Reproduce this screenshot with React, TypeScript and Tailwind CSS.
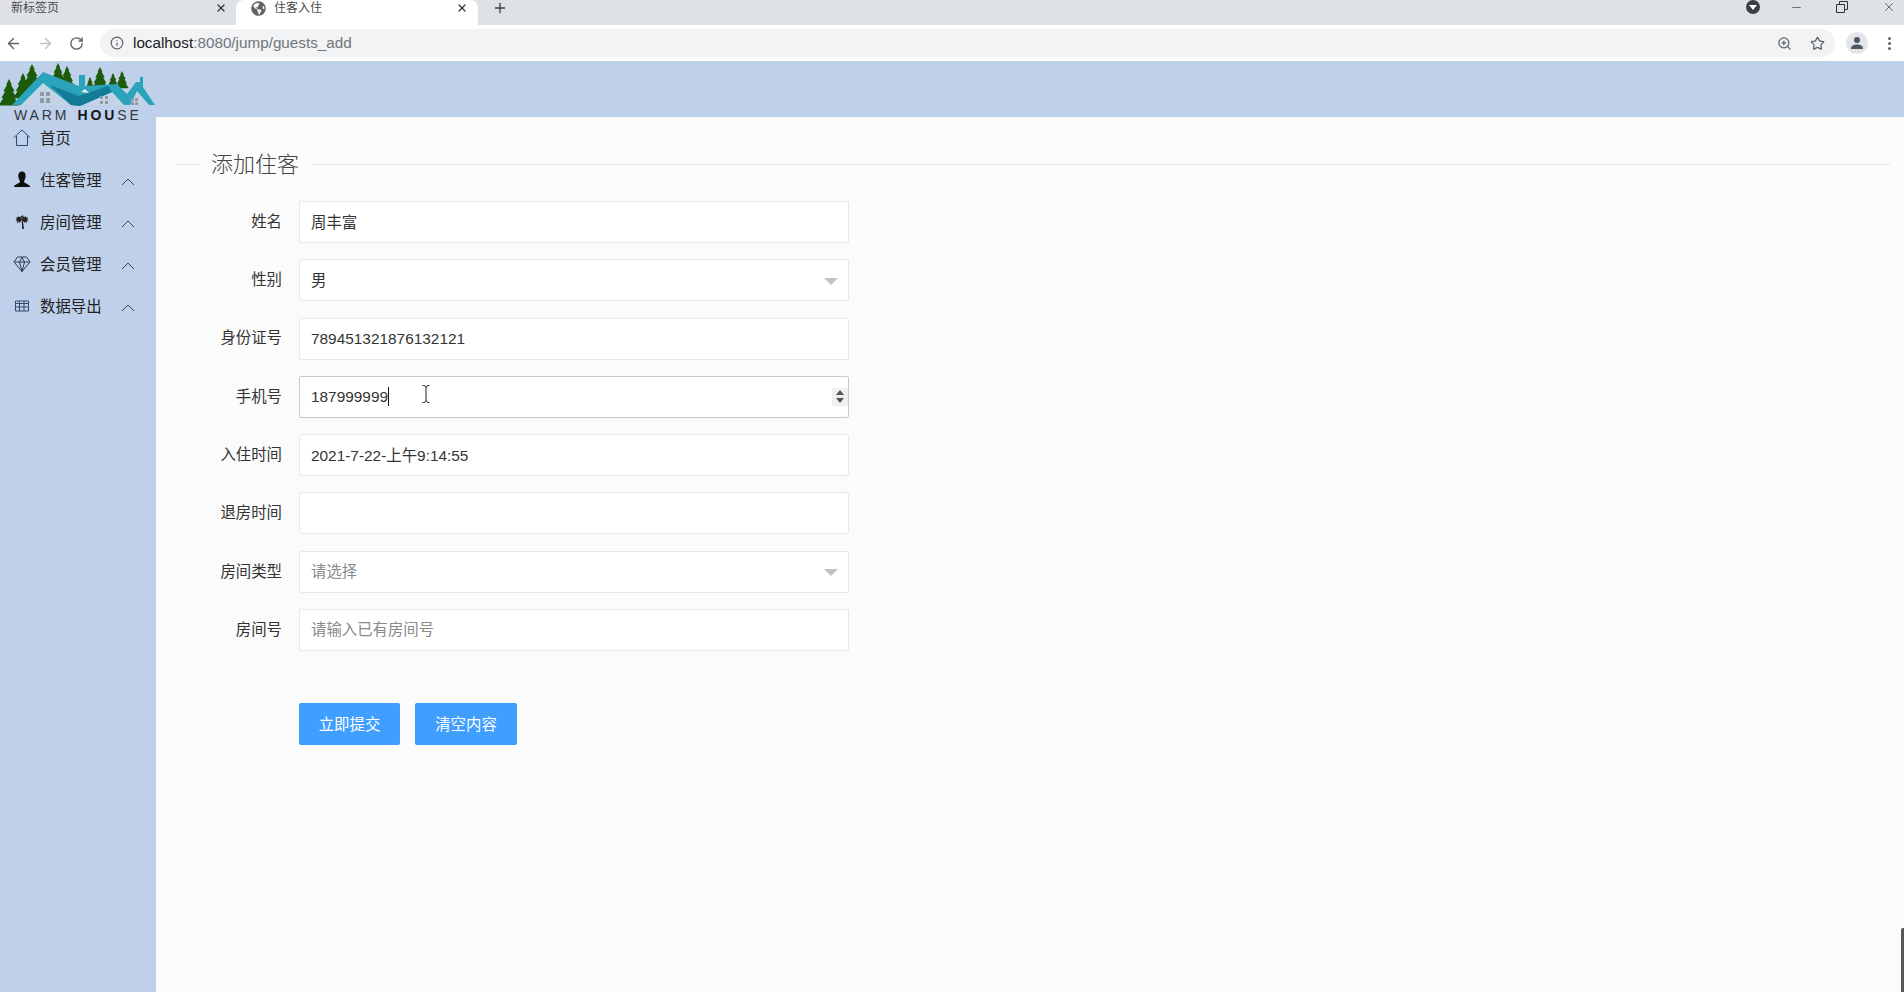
import React from 'react';
import { ArrowLeft, ArrowRight, RotateCw, Info, ZoomIn, Star, X, Plus, Minus } from 'lucide-react';
import { FaGlobeAmericas } from 'react-icons/fa';

const FONT = 'font-["Liberation_Sans","Noto_Sans_CJK_SC",sans-serif]';

const Tree = ({ x, y, s = 1 }: { x: number; y: number; s?: number }) => (
  <path
    transform={`translate(${x} ${y}) scale(${s})`}
    fill="#1d5a0a"
    d="M0 0 L3 6 L2 6 L6 13 L4 13 L8 20 L6 20 L11 28 L-11 28 L-6 20 L-8 20 L-4 13 L-6 13 L-2 6 L-3 6 Z"
  />
);

const Logo = () => (
  <div className="relative h-[62px] w-[156px] shrink-0">
    <svg viewBox="0 0 156 46" className="h-[46px] w-[156px]">
      <Tree x={9} y={18} s={0.95} />
      <Tree x={23} y={12} s={0.9} />
      <Tree x={32} y={3} s={0.95} />
      <Tree x={58} y={2} s={0.75} />
      <Tree x={67} y={5} s={0.75} />
      <Tree x={90} y={16} s={0.42} />
      <Tree x={100} y={6} s={0.8} />
      <Tree x={113} y={12} s={0.55} />
      <Tree x={122} y={10} s={0.62} />
      <path fill="#c3d3e8" d="M20 44 L43 17 L72 44 Z M84 44 L112 28 L124 44 Z M128 44 L137 28 L150 44 Z" />
      <path fill="#2ba3bb" d="M12 44 L43 11 L79 25 L79 14 L85 14 L85 25 L117 23 L127 33 L136 21 L140 21 L140 16 L143 16 L143 26 L155 44 L149 44 L137 30 L130 44 L124 44 L112 31 L80 45 L71 44 L43 22 L21 44 Z" />
      <path fill="#127c96" d="M50 24 L79 35 L108 25 L112 31 L80 45 L71 44 Z" />
      <path fill="#e6eef4" d="M81 31 L85 28 L89 32 Z" />
      <path fill="#8f9aa3" d="M40 31 h4 v4 h-4 z M46 31 h4 v4 h-4 z M40 37 h4 v5 h-4 z M46 37 h4 v5 h-4 z M100 35 h3 v3 h-3 z M105 35 h3 v3 h-3 z M100 40 h3 v3 h-3 z M105 40 h3 v3 h-3 z M131 37 h3 v3 h-3 z M135 37 h3 v3 h-3 z M131 41 h3 v3 h-3 z M135 41 h3 v3 h-3 z" />
    </svg>
    <div className="absolute left-[14px] top-[46px] flex items-center font-['Liberation_Sans',sans-serif] text-[14px] leading-[17px] tracking-[2.9px] text-[#33383d]">
      <span>WARM</span>
      <span className="ml-[8px] font-bold text-[#14171a]">HOU</span>
      <span>SE</span>
    </div>
  </div>
);

const HomeIcon = () => (
  <svg viewBox="0 0 18 18" className="h-[18px] w-[18px]" fill="none" stroke="#2f4a6e" strokeWidth="1">
    <path d="M1 8.5 L9 1 L17 8.5" />
    <path d="M3.5 7 V16.5 H14.5 V7" />
  </svg>
);
const UserIcon = () => (
  <svg viewBox="0 0 18 18" className="h-[18px] w-[18px]" fill="#111">
    <path d="M9 0.5 C12 0.5 13 3 12.6 6 C12.3 8 11.4 9.4 11 10 C11 11.5 12 12 14 13 C16 13.9 17 14.6 17 16 H1 C1 14.6 2 13.9 4 13 C6 12 7 11.5 7 10 C6.6 9.4 5.7 8 5.4 6 C5 3 6 0.5 9 0.5 Z" />
  </svg>
);
const PalmIcon = () => (
  <svg viewBox="0 0 18 18" className="h-[18px] w-[18px]" fill="#222">
    <path d="M8.6 6 L9.6 6 L11 16 L9.2 16 Z" />
    <path d="M9 6.5 L7.5 3.5 L6.5 4.5 L6 3 L4.5 4.5 L3 4 L4 5.5 L2.5 6 L4 7 L2.5 8.5 L4.5 8 L4 10.5 L6 8.5 L6.5 10 Z" />
    <path d="M9 6.5 L10.5 3.5 L11.5 4.5 L12 3 L13.5 4.5 L15 4 L14 5.5 L15.5 6 L14 7 L15.5 8.5 L13.5 8 L14 10.5 L12 8.5 L11.5 10 Z" />
    <path d="M9 6.5 L7.8 3 L8.8 3.2 L9.2 1.5 L10 3.2 L10.6 3 Z" />
  </svg>
);
const DiamondIcon = () => (
  <svg viewBox="0 0 18 18" className="h-[18px] w-[18px]" fill="none" stroke="#2a3a50" strokeWidth="1">
    <path d="M4.5 2 H13.5 L17 7 L9 16.5 L1 7 Z" />
    <path d="M1 7 H17 M6.5 7 L9 16.5 L11.5 7 L9 2.5 Z" />
  </svg>
);
const TableIcon = () => (
  <svg viewBox="0 0 18 18" className="h-[18px] w-[18px]" fill="none" stroke="#334a68" strokeWidth="1">
    <path d="M2.5 4 H15.5 V14 H2.5 Z M2.5 6.5 H15.5 M2.5 10 H15.5 M6.5 4 V14 M11 4 V14" />
  </svg>
);
const Chevron = () => (
  <svg viewBox="0 0 14 8" className="mt-[2px] h-[8px] w-[14px]" fill="none" stroke="#3a4656" strokeWidth="1">
    <path d="M1 7 L7 1 L13 7" />
  </svg>
);

const BrowserChrome = () => (
  <div className="shrink-0">
    <div className="flex h-[25px] items-start bg-[#dee1e6] text-[12px] text-[#45494e]">
      <div className="flex h-[16px] w-[236px] items-center pl-[11px] pr-[9px]">
        <span className="flex-1 leading-none">新标签页</span>
        <X className="h-[12px] w-[12px] text-[#333]" strokeWidth={2.5} />
      </div>
      <div className="h-[25px] w-[242px] rounded-t-[8px] bg-white pl-[15px] pr-[10px]">
        <div className="flex h-[16px] items-center">
          <FaGlobeAmericas className="h-[15px] w-[15px] text-[#5f6368]" />
          <span className="ml-[8px] flex-1 leading-none">住客入住</span>
          <X className="h-[12px] w-[12px] text-[#333]" strokeWidth={2.5} />
        </div>
      </div>
      <div className="ml-[14px] flex h-[16px] items-center">
        <Plus className="h-[16px] w-[16px] text-[#3c4043]" strokeWidth={2} />
      </div>
      <div className="ml-auto flex h-[14px] items-center">
        <div className="mr-[30px] flex h-[14px] w-[14px] items-center justify-center rounded-full bg-[#3c4043]">
          <div className="h-0 w-0 border-x-[4px] border-t-[5px] border-x-transparent border-t-white" />
        </div>
        <Minus className="mr-[33px] h-[13px] w-[13px] text-[#333]" strokeWidth={1.2} />
        <svg viewBox="0 0 12 12" className="mr-[34px] h-[12px] w-[12px]" fill="none" stroke="#333" strokeWidth="1">
          <path d="M0.5 3.5 H8.5 V11.5 H0.5 Z M3.5 3 V0.5 H11.5 V8.5 H9" />
        </svg>
        <X className="mr-[8px] h-[14px] w-[14px] text-[#333]" strokeWidth={1.2} />
      </div>
    </div>
    <div className="flex h-[36px] items-center bg-white">
      <ArrowLeft className="ml-[5px] h-[17px] w-[17px] text-[#5f6368]" strokeWidth={2} />
      <ArrowRight className="ml-[15px] h-[17px] w-[17px] text-[#bcbfc3]" strokeWidth={2} />
      <RotateCw className="ml-[15px] h-[15px] w-[15px] text-[#5f6368]" strokeWidth={2.2} />
      <div className="ml-[16px] flex h-[28px] w-[1735px] items-center rounded-full bg-[#f1f3f4] pl-[10px] pr-[10px]">
        <Info className="h-[14px] w-[14px] text-[#5f6368]" strokeWidth={2} />
        <span className="ml-[9px] flex-1 text-[15.25px] text-[#70757a]">
          <span className="text-[#202124]">localhost</span>:8080/jump/guests_add
        </span>
        <ZoomIn className="mr-[1px] h-[15px] w-[15px] text-[#5f6368]" strokeWidth={2} />
        <Star className="ml-[17px] h-[15px] w-[15px] text-[#5f6368]" strokeWidth={2} />
      </div>
      <div className="ml-[11px] flex h-[22px] w-[22px] items-center justify-center rounded-full bg-[#e3e5e9]">
        <svg viewBox="0 0 14 14" className="h-[14px] w-[14px]" fill="#4b5563">
          <circle cx="7" cy="4" r="3" />
          <path d="M1 13 C1 9.5 4 8.5 7 8.5 C10 8.5 13 9.5 13 13 Z" />
        </svg>
      </div>
      <div className="ml-[20px] flex flex-col gap-[2px]">
        <div className="h-[3px] w-[3px] rounded-full bg-[#5f6368]" />
        <div className="h-[3px] w-[3px] rounded-full bg-[#5f6368]" />
        <div className="h-[3px] w-[3px] rounded-full bg-[#5f6368]" />
      </div>
    </div>
  </div>
);

const navItems = [
  { label: '首页', icon: <HomeIcon />, arrow: false },
  { label: '住客管理', icon: <UserIcon />, arrow: true },
  { label: '房间管理', icon: <PalmIcon />, arrow: true },
  { label: '会员管理', icon: <DiamondIcon />, arrow: true },
  { label: '数据导出', icon: <TableIcon />, arrow: true },
];

const Sidebar = () => (
  <div className="w-[156px] shrink-0 bg-[#bfd1ea] pt-[1px]">
    {navItems.map((item) => (
      <div key={item.label} className="flex h-[42px] items-center pl-[13px] text-[15.4px] text-[#222]">
        <span className="-mt-[2px] w-[18px]">{item.icon}</span>
        <span className="ml-[9px] w-[81px] leading-none">{item.label}</span>
        {item.arrow && <Chevron />}
      </div>
    ))}
  </div>
);

const Row = ({ label, children }: { label: string; children: React.ReactNode }) => (
  <div className="flex h-[42px] items-center">
    <label className="-mt-[1px] w-[105px] text-right text-[15.4px] leading-none text-[#333]">{label}</label>
    <div className="ml-[17px] h-[42px] w-[550px]">{children}</div>
  </div>
);

const boxClass = 'flex h-full items-center rounded-[2px] border border-[#e8e8e8] bg-white pl-[11px] text-[15.4px] leading-none';

const Arrow = () => (
  <div className="ml-auto mr-[10px] mt-[2px] h-0 w-0 border-x-[7px] border-t-[7px] border-x-transparent border-t-[#c2c2c2]" />
);

const Form = () => (
  <div className="flex-1 bg-[#fbfbfc] pl-[21px] pr-[14px] pt-[36px]">
    <div className="flex h-[22px] items-center">
      <div className="h-px w-[22px] bg-[#e6e6e6]" />
      <span className="mx-[12px] mt-[1px] text-[22px] font-light leading-none text-[#444]">添加住客</span>
      <div className="h-px flex-1 bg-[#e6e6e6]" />
    </div>
    <div className="mt-[26px] flex flex-col gap-[16.3px]">
      <Row label="姓名"><div className={`${boxClass} pt-[1px] text-[#333]`}>周丰富</div></Row>
      <Row label="性别"><div className={`${boxClass} text-[#333]`}>男<Arrow /></div></Row>
      <Row label="身份证号"><div className={`${boxClass} text-[#333]`}>789451321876132121</div></Row>
      <Row label="手机号">
        <div className="relative flex h-full items-center rounded-[2px] border border-[#c9c9c9] bg-white pl-[11px] text-[15.4px] leading-none text-[#333]">
          <span className="border-r border-[#111] leading-[19px]">187999999</span>
          <svg viewBox="0 0 8 18" className="absolute left-[122px] top-[8px] h-[18px] w-[8px]" fill="none" stroke="#222" strokeWidth="1">
            <path d="M0.5 0.5 C2.5 0.5 4 1 4 2.5 V15.5 C4 17 2.5 17.5 0.5 17.5 M7.5 0.5 C5.5 0.5 4 1 4 2.5 M4 15.5 C4 17 5.5 17.5 7.5 17.5" />
          </svg>
          <div className="absolute right-0 top-[11px] flex h-[18px] w-[16px] flex-col items-center justify-center gap-[3px] bg-[#f1f1f1]">
            <div className="h-0 w-0 border-x-[4px] border-b-[5px] border-x-transparent border-b-[#555]" />
            <div className="h-0 w-0 border-x-[4px] border-t-[5px] border-x-transparent border-t-[#555]" />
          </div>
        </div>
      </Row>
      <Row label="入住时间"><div className={`${boxClass} pt-[2px] text-[#333]`}>2021-7-22-上午9:14:55</div></Row>
      <Row label="退房时间"><div className={boxClass} /></Row>
      <Row label="房间类型"><div className={`${boxClass} text-[#8a8a8a]`}>请选择<Arrow /></div></Row>
      <Row label="房间号"><div className={`${boxClass} text-[#8a8a8a]`}>请输入已有房间号</div></Row>
    </div>
    <div className="ml-[122px] mt-[52px] flex gap-[15px]">
      <button className="h-[42px] w-[101px] rounded-[2px] bg-[#409eff] text-[15.4px] text-white">立即提交</button>
      <button className="h-[42px] w-[102px] rounded-[2px] bg-[#409eff] text-[15.4px] text-white">清空内容</button>
    </div>
  </div>
);

export default function App() {
  return (
    <div className={`relative flex h-[992px] w-[1904px] flex-col overflow-hidden ${FONT}`}>
      <BrowserChrome />
      <div className="h-[56px] shrink-0 bg-[#bfd1ea]">
        <Logo />
      </div>
      <div className="flex min-h-0 flex-1">
        <Sidebar />
        <Form />
      </div>
      <div className="absolute bottom-0 right-0 h-[64px] w-[3px] rounded-tl-[2px] bg-[#55565a]" />
    </div>
  );
}
